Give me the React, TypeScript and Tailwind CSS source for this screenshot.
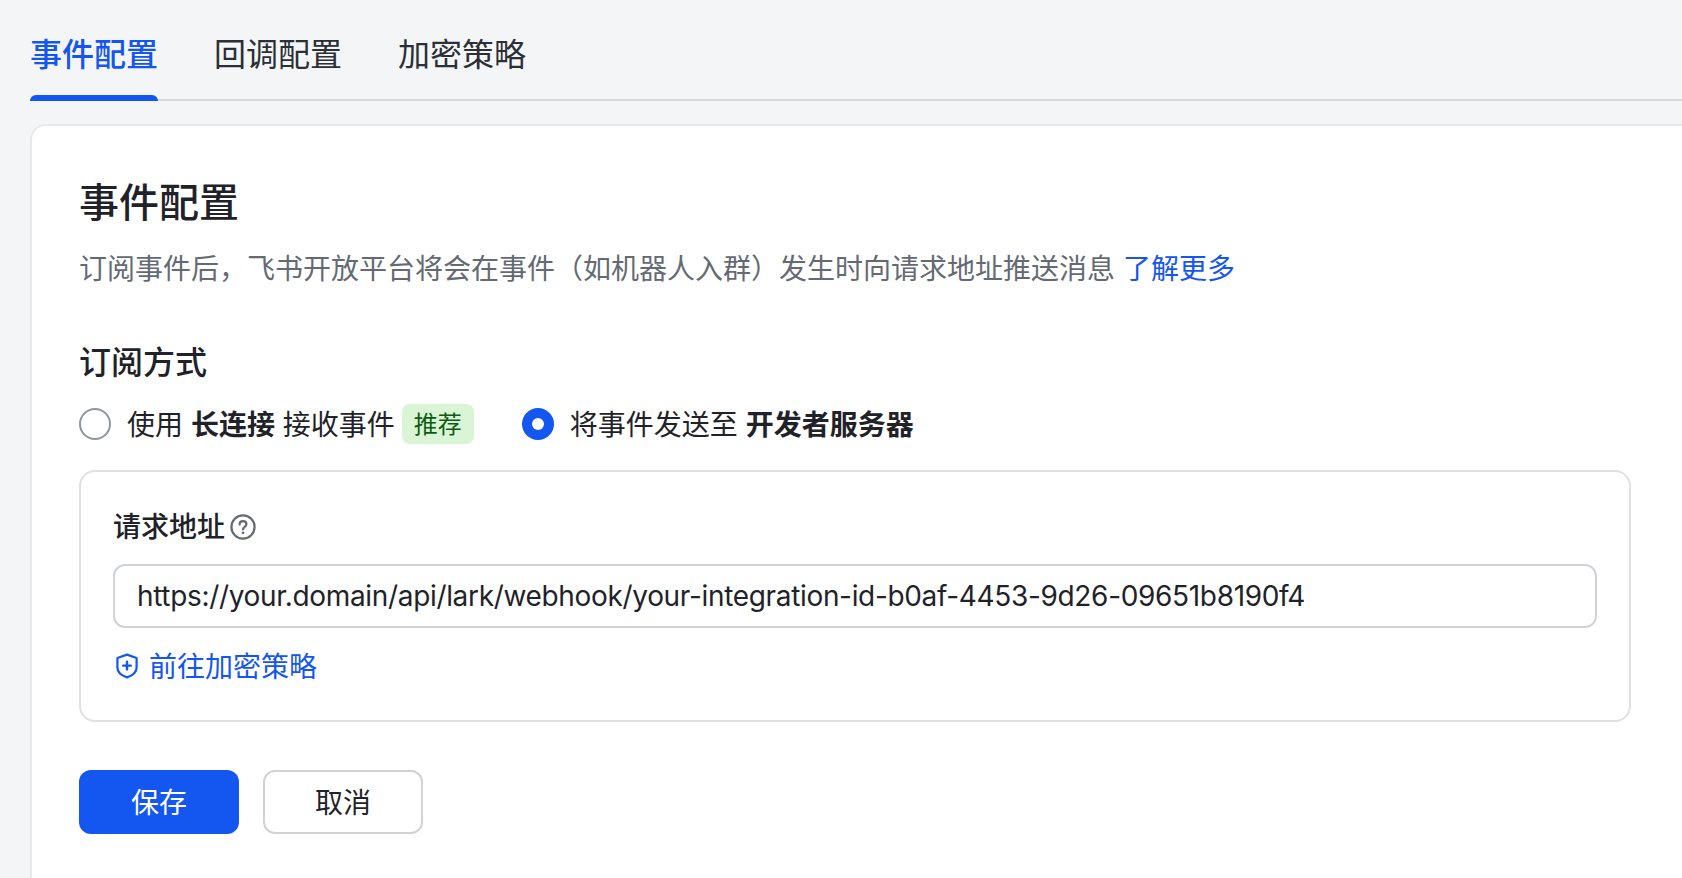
export default function App() {
  const tabs = ["事件配置", "回调配置", "加密策略"]

  return (
    <div className="h-screen overflow-hidden flex flex-col bg-[#f4f5f7] pl-[30px] text-[#1f2329] font-['Inter','Noto_Sans_CJK_SC',sans-serif]">
      <div className="h-[101px] shrink-0 flex gap-[56px] border-b-2 border-[#d4d6da] pt-[33px]">
        {tabs.map((tab, i) => (
          <div
            key={tab}
            className={
              i === 0
                ? "relative h-[66px] text-[32px] leading-[44px] text-[#1456f0] font-medium"
                : "relative h-[66px] text-[32px] leading-[44px] text-[#2b2f36]"
            }
          >
            {tab}
            {i === 0 && (
              <span className="absolute left-0 right-0 bottom-[-2px] h-[6px] rounded-t-[6px] bg-[#1456f0]" />
            )}
          </div>
        ))}
      </div>

      <div className="flex-1 mt-[23px] bg-white border-l-2 border-t-2 border-[#e6e8eb] rounded-tl-[16px] pt-[49px] pl-[47px] pr-[51px]">
        <h1 className="text-[40px] leading-[56px] font-medium">事件配置</h1>
        <p className="mt-[18px] text-[28px] leading-[40px] text-[#646a73]">
          订阅事件后，飞书开放平台将会在事件（如机器人入群）发生时向请求地址推送消息{" "}
          <a className="text-[#1456f0]">了解更多</a>
        </p>

        <h2 className="mt-[52px] text-[32px] leading-[44px] font-medium">订阅方式</h2>

        <div className="mt-[17px] h-[44px] flex items-center text-[28px]">
          <label className="flex items-center">
            <span className="w-[32px] h-[32px] rounded-full border-2 border-[#8f959e] bg-white" />
            <span className="ml-[16px] pt-[2px] whitespace-pre">
              使用 <b className="font-semibold">长连接</b> 接收事件
            </span>
            <span className="ml-[7px] h-[40px] w-[72px] pt-[2px] flex items-center justify-center rounded-[8px] bg-[#d9f5d6] text-[24px] text-[#0e5c13]">
              推荐
            </span>
          </label>
          <label className="flex items-center ml-[48px]">
            <span className="w-[32px] h-[32px] rounded-full bg-[#1456f0] flex items-center justify-center">
              <span className="w-[12px] h-[12px] rounded-full bg-white" />
            </span>
            <span className="ml-[16px] pt-[2px] whitespace-pre">
              将事件发送至 <b className="font-semibold">开发者服务器</b>
            </span>
          </label>
        </div>

        <div className="mt-[24px] border-2 border-[#dee0e3] rounded-[16px] pt-[34px] px-[32px] pb-[34px]">
          <div className="h-[40px] pt-[2px] flex items-center text-[28px] font-medium">
            请求地址
            <svg className="ml-[5px] w-[26px] h-[26px]" viewBox="0 0 26 26" fill="none">
              <circle cx="13" cy="13" r="11.6" stroke="#646a73" strokeWidth="2.200" />
              <path
                d="M9.600 10.400c0-1.900 1.500-3.200 3.400-3.200s3.400 1.300 3.400 3c0 2.600-3.400 2.700-3.400 5.200"
                stroke="#646a73"
                strokeWidth="2.200"
                strokeLinecap="round"
              />
              <circle cx="13" cy="18.800" r="1.400" fill="#646a73" />
            </svg>
          </div>

          <div className="mt-[18px] h-[64px] flex items-center border-2 border-[#d0d3d6] rounded-[12px] px-[22px] text-[28px] tracking-[-0.33px] text-[#1f2329]">
            https://your.domain/api/lark/webhook/your-integration-id-b0af-4453-9d26-09651b8190f4
          </div>

          <a className="mt-[18px] h-[40px] flex items-center text-[28px] text-[#1456f0]">
            <svg className="ml-[3px] w-[22px] h-[26px]" viewBox="0 0 22 26" fill="none">
              <path
                d="M11 1.600 20.600 5v9.400c0 4.600-4 8-9.600 10-5.600-2-9.600-5.400-9.600-10V5L11 1.600Z"
                stroke="#1456f0"
                strokeWidth="2.200"
                strokeLinejoin="round"
              />
              <path d="M11 8.800v7.600M7.200 12.600h7.600" stroke="#1456f0" strokeWidth="2.400" strokeLinecap="round" />
            </svg>
            <span className="ml-[11px] pt-[2px]">前往加密策略</span>
          </a>
        </div>

        <div className="mt-[48px] flex gap-[24px] text-[28px]">
          <button className="w-[160px] h-[64px] pt-[2px] rounded-[12px] bg-[#1456f0] text-white">保存</button>
          <button className="w-[160px] h-[64px] pt-[2px] rounded-[12px] bg-white border-2 border-[#d0d3d6] text-[#1f2329]">
            取消
          </button>
        </div>
      </div>
    </div>
  )
}
